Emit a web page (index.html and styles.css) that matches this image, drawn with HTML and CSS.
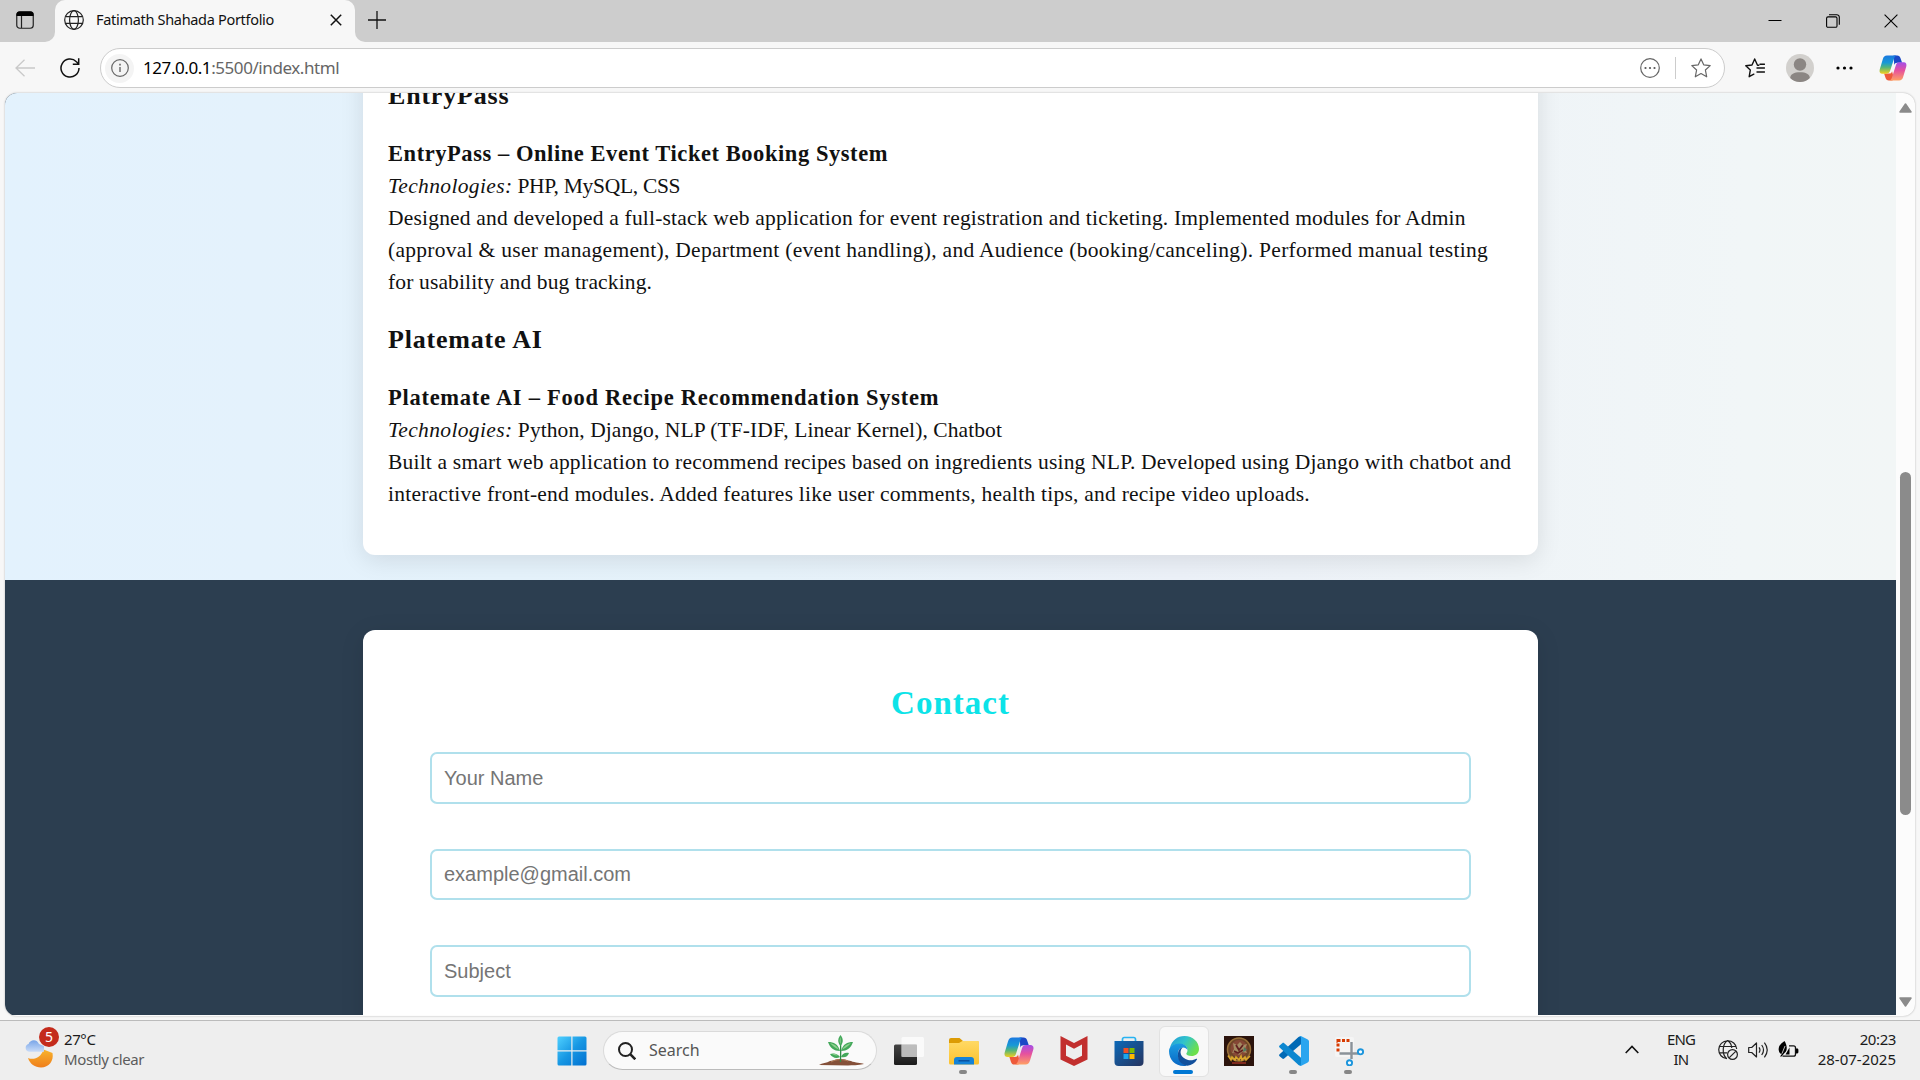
FILE: index.html
```html
<!DOCTYPE html>
<html lang="en">
<head>
<meta charset="utf-8">
<title>Fatimath Shahada Portfolio</title>
<link rel="stylesheet" href="styles.css">
</head>
<body>
<svg class="defs" width="0" height="0" aria-hidden="true">
  <defs>
    <linearGradient id="cpA" x1="0" y1="0" x2="0" y2="1"><stop offset="0" stop-color="#1a78e0"/><stop offset=".4" stop-color="#1799d6"/><stop offset=".65" stop-color="#52b57b"/><stop offset="1" stop-color="#f2cf1d"/></linearGradient>
    <linearGradient id="cpB" x1="0" y1="0" x2="0" y2="1"><stop offset="0" stop-color="#a34ee8"/><stop offset=".45" stop-color="#e6519e"/><stop offset="1" stop-color="#ffa063"/></linearGradient>
    <linearGradient id="win" x1="0" y1="0" x2="1" y2="1"><stop offset="0" stop-color="#4fd0ff"/><stop offset=".5" stop-color="#1797e3"/><stop offset="1" stop-color="#006fd0"/></linearGradient>
    <linearGradient id="fold" x1="0" y1="0" x2="0" y2="1"><stop offset="0" stop-color="#ffd965"/><stop offset="1" stop-color="#fcc22e"/></linearGradient>
    <linearGradient id="store" x1="0" y1="0" x2="1" y2="1"><stop offset="0" stop-color="#0c69b8"/><stop offset="1" stop-color="#26345f"/></linearGradient>
    <linearGradient id="edA" x1="0" y1="0" x2="1" y2=".5"><stop offset="0" stop-color="#2497d8"/><stop offset=".5" stop-color="#30c3cc"/><stop offset="1" stop-color="#6be04d"/></linearGradient>
    <linearGradient id="edB" x1="0" y1="0" x2="0" y2="1"><stop offset="0" stop-color="#1b9de2"/><stop offset="1" stop-color="#0a67c4"/></linearGradient>
    <linearGradient id="moon" x1="0" y1="0" x2="0" y2="1"><stop offset="0" stop-color="#f8b42c"/><stop offset="1" stop-color="#ef7e1b"/></linearGradient>
    <linearGradient id="cloud" x1="0" y1="0" x2="0" y2="1"><stop offset="0" stop-color="#79a5e8"/><stop offset="1" stop-color="#c9dcf8"/></linearGradient>
    <linearGradient id="tvw" x1="0" y1="0" x2="0" y2="1"><stop offset="0" stop-color="#444"/><stop offset="1" stop-color="#1b1b1b"/></linearGradient>
    <symbol id="copilot" viewBox="0 0 30 28">
      <path d="M15.500 .5h4c2 0 3 1 3.500 2.600l1.800 5.200h-5.300c-2 0-2.600.7-3.200 2.500L16 5z" fill="#1b48c6"/>
      <path d="M14.500 27.500h-4c-2 0-3-1-3.500-2.600L5.400 20h5.400c2 0 2.700-.7 3.200-2.500l1.500 6z" fill="#ee5a3a"/>
      <path d="M8.500 .5h10.300c-1.500.5-2.200 1.700-2.900 4L12 16.800c-.7 2.200-1.800 3.300-4 3.300H3.500C1 20.100 0 18 .7 15.500L4 4.500C4.800 1.800 6 .5 8.500.5z" fill="url(#cpA)"/>
      <path d="M21.500 27.500H11.200c1.500-.5 2.200-1.700 2.900-4L18 11.200c.7-2.200 1.800-3.300 4-3.300h4.500c2.500 0 3.500 2.100 2.800 4.600L26 23.500c-.8 2.700-2 4-4.500 4z" fill="url(#cpB)"/>
    </symbol>
  </defs>
</svg>

<div class="screen">
  <header class="titlebar">
    <div class="tab-actions">
      <svg width="18" height="18" viewBox="0 0 18 18"><rect x=".75" y=".75" width="16.500" height="16.500" rx="3" fill="none" stroke="#222" stroke-width="1.200"/><path d="M.5 5V3.500a3 3 0 0 1 3-3h11a3 3 0 0 1 3 3V5z" fill="#000"/><path d="M5.500 5v12" stroke="#222" stroke-width="1.200"/></svg>
    </div>
    <div class="tab">
      <svg width="20" height="20" viewBox="0 0 20 20" fill="none" stroke="#222" stroke-width="1.200"><circle cx="10" cy="10" r="9.300"/><ellipse cx="10" cy="10" rx="4.400" ry="9.300"/><path d="M1.500 6.700h17M1.500 13.300h17"/></svg>
      <span class="tab-title">Fatimath Shahada Portfolio</span>
      <svg class="tab-close" width="12" height="12" viewBox="0 0 12 12" stroke="#111" stroke-width="1.500"><path d="M.8.800l10.400 10.400M11.200.8L.8 11.200"/></svg>
    </div>
    <svg class="new-tab" width="18" height="18" viewBox="0 0 18 18" stroke="#111" stroke-width="1.300"><path d="M9 0v18M0 9h18"/></svg>
    <div class="window-buttons">
      <svg width="14" height="14" viewBox="0 0 14 14"><path d="M.5 6.500h13" stroke="#000"/></svg>
      <svg width="14" height="14" viewBox="0 0 14 14" fill="none" stroke="#000" stroke-width="1.100"><rect x=".6" y="2.900" width="10.400" height="10.400" rx="1.400"/><path d="M3 .7h7.800a2.500 2.500 0 0 1 2.500 2.500v7.600"/></svg>
      <svg width="14" height="14" viewBox="0 0 14 14" stroke="#000" stroke-width="1.100"><path d="M.6.600l12.800 12.800M13.400.6L.6 13.400"/></svg>
    </div>
  </header>

  <div class="toolbar">
    <svg class="back" width="20" height="18" viewBox="0 0 20 18" fill="none" stroke="#c9c9c9" stroke-width="1.300"><path d="M20 9H1M9.500.8L1 9l8.500 8.200"/></svg>
    <svg class="reload" width="20" height="20" viewBox="0 0 20 20" fill="none" stroke="#111" stroke-width="1.500"><path d="M19 10a9 9 0 1 1-2.600-6.300L18.500 5.700M18.700.3v5.900h-5.900"/></svg>
    <div class="address">
      <span class="info"><svg width="18" height="18" viewBox="0 0 18 18" fill="none" stroke="#666" stroke-width="1.200"><circle cx="9" cy="9" r="8.300"/><path d="M9 8v5" stroke-width="1.400"/><path d="M9 4.800v1.600" stroke-width="1.600"/></svg></span>
      <span class="url">127.0.0.1<span class="url-rest">:5500/index.html</span></span>
      <svg class="more-circle" width="20" height="20" viewBox="0 0 20 20"><circle cx="10" cy="10" r="9.300" fill="none" stroke="#666" stroke-width="1.200"/><g fill="#555"><circle cx="5.500" cy="10" r="1.100"/><circle cx="10" cy="10" r="1.100"/><circle cx="14.500" cy="10" r="1.100"/></g></svg>
      <span class="divider"></span>
      <svg width="20" height="20" viewBox="0 0 20 20" fill="none" stroke="#666" stroke-width="1.200" stroke-linejoin="round"><path d="M10 .9l2.700 5.900 6.500.8-4.800 4.400 1.300 6.800L10 15.600l-5.700 3.200L5.600 12 .8 7.600l6.500-.8z"/></svg>
    </div>
    <div class="toolbar-right">
      <svg width="20" height="20" viewBox="0 0 20 20" fill="none" stroke="#111" stroke-width="1.400" stroke-linejoin="round" stroke-linecap="round"><path d="M13.800 7.200h-1.300L9.700 1 7 7l-6.200.8 4.500 4.300-1.100 6.600 4.600-2.500M12 10h7.500M12 14h7.500M15 6.200h4.500"/></svg>
      <svg class="avatar" width="28" height="28" viewBox="0 0 28 28"><circle cx="14" cy="14" r="14" fill="#d2d0cd"/><circle cx="14" cy="10.500" r="6.200" fill="#8b8683"/><path d="M4.200 24c0-4 4-5.800 9.800-5.800s9.800 1.800 9.800 5.800A14 14 0 0 1 4.200 24z" fill="#8b8683"/></svg>
      <svg class="menu-dots" width="17" height="4" viewBox="0 0 17 4"><circle cx="2" cy="2" r="1.600"/><circle cx="8.500" cy="2" r="1.600"/><circle cx="15" cy="2" r="1.600"/></svg>
      <svg class="copilot" width="28" height="26"><use href="#copilot"/></svg>
    </div>
  </div>

  <div class="viewport">
    <main class="page">
      <section class="projects">
        <article class="card">
          <h3>EntryPass</h3>
          <p>
            <strong class="name-entry">EntryPass – Online Event Ticket Booking System</strong><br>
            <span class="tech-short"><em>Technologies:</em> PHP, MySQL, CSS</span><br>
            Designed and developed a full-stack web application for event registration and ticketing. Implemented modules for Admin<br>
            <span class="loose">(approval &amp; user management), Department (event handling), and Audience (booking/canceling). Performed manual testing</span><br>
            <span class="tight">for usability and bug tracking.</span>
          </p>
          <h3>Platemate AI</h3>
          <p>
            <strong class="name-plate">Platemate AI – Food Recipe Recommendation System</strong><br>
            <span class="tech-long"><em>Technologies:</em> Python, Django, NLP (TF-IDF, Linear Kernel), Chatbot</span><br>
            Built a smart web application to recommend recipes based on ingredients using NLP. Developed using Django with chatbot and<br>
            <span class="medium">interactive front-end modules. Added features like user comments, health tips, and recipe video uploads.</span>
          </p>
        </article>
      </section>
      <section class="contact">
        <form class="card contact-card">
          <h2>Contact</h2>
          <input type="text" placeholder="Your Name">
          <input type="email" placeholder="example@gmail.com">
          <input type="text" placeholder="Subject">
        </form>
      </section>
    </main>
    <div class="scrollbar">
      <svg width="13" height="10" viewBox="0 0 13 10"><path d="M6.500 1L12 9H1z" fill="#8b8b8b" stroke="#8b8b8b" stroke-width="1.500" stroke-linejoin="round"/></svg>
      <div class="thumb"></div>
      <svg width="13" height="10" viewBox="0 0 13 10"><path d="M6.500 9L12 1H1z" fill="#8b8b8b" stroke="#8b8b8b" stroke-width="1.500" stroke-linejoin="round"/></svg>
    </div>
  </div>

  <footer class="taskbar">
    <div class="weather">
      <svg width="36" height="36" viewBox="0 0 36 36"><path d="M3 25c6 2.500 13-.5 15.500-8.500L27.500 20C29 28 24 34.500 16 34.500 10 34.500 5 31 3 25z" fill="url(#moon)"/><path d="M4 18.800a4 4 0 0 1-.4-7.800C4.200 7.800 11 4.500 14 11l5 2v5.800z" fill="url(#cloud)"/></svg>
      <span class="badge">5</span>
      <div class="weather-text"><span>27°C</span><span class="muted">Mostly clear</span></div>
    </div>
    <div class="app">
      <svg width="30" height="30" viewBox="0 0 30 30"><path d="M2 .5h12.300v13.800H.5V2A1.500 1.500 0 0 1 2 .5zM15.500.5H28A1.500 1.500 0 0 1 29.500 2v12.300h-14zM.5 15.500h13.800v14H2A1.500 1.500 0 0 1 .5 28zM15.500 15.500h14V28a1.500 1.500 0 0 1-1.500 1.500H15.500z" fill="url(#win)"/></svg>
    </div>
    <div class="search">
      <svg width="18" height="18" viewBox="0 0 18 18" fill="none" stroke="#222" stroke-width="2"><circle cx="7.500" cy="7.500" r="6.500"/><path d="M12.200 12.200L17.300 17.300" stroke-width="2.600"/></svg>
      <span>Search</span>
      <svg class="plant" width="46" height="31" viewBox="0 0 46 31"><path d="M0 30c3-2 8-2 11-4 5-1 7-2.500 11-2 4 0 6 1.500 10 2 4 2 10 1.500 13 3-6 1.500-12 1-16 1.500z" fill="#845039"/><path d="M12 27c5-3 12-3 17-1" stroke="#b07b58" fill="none"/><path d="M21.500 27c.3-8 .3-14 0-22" stroke="#2d8b45" stroke-width="1.300" fill="none"/><g fill="#43a85a"><path d="M21.500 11C18 7 19 3 21.500 0 24 3 25 7 21.500 11z"/><path d="M21 16c-6 0-10-3-12-9 6 0 10 2 12 9zM22 16c6 0 10-3 12-9-6 0-10 2-12 9z"/><path d="M21 22c-4 2-8 .500-10-3 4-1.500 8 0 10 3zM22 22c4 1 7-.5 8-4-4-1-7 1-8 4z"/></g><g fill="#8ed08f"><path d="M21.700 9c-1.700-2-1.200-5 0-7zM20 14.500C16 13 13.500 11 11 8c4 1 7 3 9 6.500zM23 14.500c4-1.500 6.500-3.500 9-6.500-4 1-7 3-9 6.500zM19 20.500c-2 0-4 0-6-1.500 2-.5 4 0 6 1.500z"/></g></svg>
    </div>
    <div class="app"><svg width="30" height="30" viewBox="0 0 30 30"><rect x="0" y="8.500" width="23" height="20.500" rx="1.500" fill="url(#tvw)"/><rect x="7.500" y="1" width="22.500" height="20" rx="1.500" fill="#fff" fill-opacity=".72"/><rect x="7.500" y="8.500" width="15.500" height="12.500" fill="#b5b5b5" fill-opacity=".65"/></svg></div>
    <div class="app"><svg width="30" height="30" viewBox="0 0 30 30"><path d="M0 4a2 2 0 0 1 2-2h8.500L14 5h14a2 2 0 0 1 2 2v4H0z" fill="#dc9b04"/><path d="M0 7h10l3.500-2H28.500A1.500 1.500 0 0 1 30 6.500V27a1.500 1.500 0 0 1-1.500 1.500h-27A1.500 1.500 0 0 1 0 27z" fill="url(#fold)"/><path d="M5 28.500V24a3 3 0 0 1 3-3h14a3 3 0 0 1 3 3v4.500z" fill="#1583d8"/><path d="M9.500 24.800h11" stroke="#084f9c" stroke-width="1.400"/></svg><i class="dot"></i></div>
    <div class="app"><svg width="30" height="28"><use href="#copilot"/></svg></div>
    <div class="app"><svg width="28" height="30" viewBox="0 0 28 30"><path d="M.5 0L14 7 27.500 0v23.500L14 30 .5 23.500zM6 8.500v11.300l8 4 8-4V8.500l-8 4.300z" fill="#c22f2e" fill-rule="evenodd"/></svg></div>
    <div class="app"><svg width="30" height="30" viewBox="0 0 30 30"><path d="M8.500 6V3.200A1.700 1.700 0 0 1 10.200 1.500h9.600a1.700 1.700 0 0 1 1.700 1.700V6" fill="none" stroke="#27b3f2" stroke-width="1.700"/><path d="M.5 5h29v21a4 4 0 0 1-4 4h-21a4 4 0 0 1-4-4z" fill="url(#store)"/><path d="M9.500 12h5v5h-5z" fill="#f25022"/><path d="M15.500 12h5v5h-5z" fill="#7fba00"/><path d="M9.500 18h5v5h-5z" fill="#1ba7ec"/><path d="M15.500 18h5v5h-5z" fill="#ffb901"/></svg></div>
    <div class="app active"><svg width="30" height="30" viewBox="0 0 30 30"><path d="M1 12C2.500 4.500 8.500 0 15.500 0 24 0 30 6 30 13c0 4.500-3.500 7-7.500 7-3.500 0-5.200-1.200-5.200-2.200 0-.9 1.200-1.300 1.200-3.800 0-3.500-3.500-6-7.500-6C6.500 8 3 9.500 1 12z" fill="url(#edA)"/><path d="M0 15C.2 10.300 4.800 7.500 10.500 7.500c5 0 8 3.200 8 6.500-.8-1.500-2.500-2.500-4.500-2.500-3.500 0-5.500 3.500-5 7.500.6 5.500 4.500 9.500 9 10.700C7.500 31.500 0 24.500 0 15z" fill="url(#edB)"/><path d="M14 11.500c-3 1.500-4.300 8 2.500 11.500 4.200 2.200 8.500 1 10.800-.3.600-.2 1 .1.700.7C26 27 22.500 29 18.500 29.800 12 29 8.500 24 9 19c-.3-4 1.800-7.500 5-7.500z" fill="#12509c"/></svg><i class="dot wide"></i></div>
    <div class="app"><svg width="30" height="30" viewBox="0 0 30 30"><path d="M0 0h30v30H0z" fill="#2b130c"/><circle cx="15" cy="13.500" r="11.500" fill="#6d4527" stroke="#98703a" stroke-width="1.500"/><circle cx="15" cy="12.500" r="8.500" fill="#854735"/><path d="M9 7l4 2 3-3 3 3 4-1-2 5 2 4-5-1-3 3-3-3-4 1 2-4z" fill="#a38a62"/><path d="M12 9l3 5 4-5M10 15l4 2 5-3" stroke="#612020" stroke-width="1.800" fill="none"/><path d="M20 11l3 3-4 2z" fill="#4d7b60"/><path d="M4 19.500l3 4.500 1-3 3 3 1-3 3 3 2-4 1 4 3-3 1 3 4-4" stroke="#d9a62c" stroke-width="1.600" fill="none"/><path d="M8 27h14" stroke="#9c3224" stroke-width="1.500"/></svg></div>
    <div class="app"><svg width="30" height="30" viewBox="0 0 30 30"><path d="M22 0v8.300L5.200 22.500c-.7.600-1.300.6-1.900 0L.6 20.200c-.7-.6-.7-1.300 0-1.900L19.500 1z" fill="#0069b5"/><path d="M3.300 7.200c.600-.5 1.200-.5 1.900 0L22 21.700V30l-2.500-1L.6 11.500c-.7-.7-.7-1.300 0-1.900z" fill="#0c87d0"/><path d="M19.500 29.500c1 .7 1.900.7 2.900.2l5.900-2.900c1.100-.5 1.700-1.200 1.700-2.500V5.600c0-1.200-.6-1.900-1.700-2.400L22.400.3c-1-.5-2-.3-2.900.7 1.200-1 2.500-.3 2.500 1.200v25.600c0 1.500-1.300 2.500-2.500 1.700z" fill="#2aa5ef"/></svg><i class="dot"></i></div>
    <div class="app"><svg width="30" height="30" viewBox="0 0 30 30"><rect x="1" y="1" width="19" height="20" rx="2" fill="#f5f5f5"/><path d="M17.500 6v17M5.500 17.500H24" stroke="#8b9299" stroke-width="2.400"/><path d="M2.500 3h4v3h-3v1h-1zM8 3h3v3H8zM12.500 3h3v3h-3zM2.500 7.500h3v3h-3zM2.500 12.500h3v3h-3z" fill="#d83b01"/><g fill="#f4fbff" stroke="#1c95dc" stroke-width="1.900"><circle cx="26.500" cy="15.800" r="2.600"/><circle cx="15.500" cy="26.800" r="2.600"/></g></svg><i class="dot"></i></div>
    <div class="tray">
      <svg width="14" height="9" viewBox="0 0 14 9" fill="none" stroke="#111" stroke-width="1.600"><path d="M.7 8L7 1.500 13.300 8"/></svg>
      <div class="lang"><span>ENG</span><span>IN</span></div>
      <svg width="20" height="20" viewBox="0 0 20 20" fill="none" stroke="#222" stroke-width="1.200"><path d="M9 18.700A9 9 0 1 1 18.700 9M8.500 18.500C3.500 14 4.500 3 9.700.7M13.800 8C13.500 4.500 12 2 9.700.7M1.500 6.500h16.500M1.500 12.800H9"/><circle cx="14.500" cy="14.500" r="4.900"/><path d="M11.300 17.700l6.400-6.400"/></svg>
      <svg class="volume" width="21" height="18" viewBox="0 0 21 18" fill="none" stroke="#222" stroke-width="1.200" stroke-linejoin="round"><path d="M.7 6.500h3L8.500 2v14l-4.800-4.500h-3z"/><path d="M11 6.300c1.200 1.700 1.200 3.700 0 5.400M13.700 4c2.200 3 2.200 7 0 10M16.400 1.700c3.500 4.500 3.500 10.100 0 14.600"/></svg>
      <svg width="21" height="18" viewBox="0 0 21 18"><path d="M11 4.800h4.500a2 2 0 0 1 2 2v6.400a2 2 0 0 1-2 2H4.500" fill="none" stroke="#111" stroke-width="1.300"/><path d="M18 7.500h1.200c.8 0 1.200.7 1.200 1.400v2.200c0 .7-.4 1.400-1.200 1.400H18z"/><path d="M7.500 13.500L11.500 6.500v7z"/><path d="M6.500 0C2 3 0 6 .8 9.500 1.200 12 2.500 13 4 12.800L2 15.500h1.500L6.500 12C10 9.500 9 4 6.500 0z"/><path d="M7 5L4 12.500" stroke="#eee" stroke-width=".8"/></svg>
      <div class="clock"><span class="time">20:23</span><span>28-07-2025</span></div>
    </div>
  </footer>
</div>
</body>
</html>
```
FILE: styles.css
```css
* { box-sizing: border-box; }
body { margin: 0; }
.defs { position: absolute; }
svg { display: block; flex: none; }
.screen {
  width: 1920px; height: 1080px; overflow: hidden;
  display: flex; flex-direction: column;
  background: #f7f7f7; color: #1b1b1b;
  font-family: "Noto Sans", "Open Sans", sans-serif; font-size: 15px;
  white-space: nowrap;
}

/* Browser window */
.titlebar { height: 42px; display: flex; background: #f7f7f7; flex: none; }
.tab-actions { width: 55px; padding: 11px 0 0 16px; background: #cdcdcd; border-bottom-right-radius: 10px; }
.tab { width: 300px; display: flex; align-items: center; padding: 0 13px 2px 9px; background: #f7f7f7; border-radius: 10px 10px 0 0; box-shadow: 0 -10px 0 #cdcdcd; }
.tab-title { margin: 0 0 2px 12px; color: #111; font-size: 14.5px; letter-spacing: -.31px; }
.tab-close { margin-left: auto; }
.new-tab { box-sizing: content-box; padding: 11px 13px 13px; background: #cdcdcd; border-bottom-left-radius: 10px; }
.window-buttons { flex: 1; display: flex; justify-content: flex-end; gap: 44px; padding: 14px 22px 0 0; background: #cdcdcd; }

.toolbar { height: 51px; flex: none; display: flex; align-items: center; padding: 1px 13px 0 15px; }
.reload { margin-left: 25px; }
.address { width: 1625px; height: 40px; margin-left: 20px; display: flex; align-items: center; padding: 0 13px 0 4px; background: #fff; border: 1px solid #ccc; border-radius: 20px; }
.info { width: 29px; height: 29px; border-radius: 50%; background: #f4f4f4; display: grid; place-items: center; }
.url { margin: 0 0 1px 9px; font-size: 17px; letter-spacing: -.43px; color: #000; }
.url-rest { color: #666; }
.more-circle { margin-left: auto; }
.divider { width: 1px; height: 22px; margin: 0 15px; background: #ccc; }
.toolbar-right { flex: 1; display: flex; align-items: center; margin-left: 20px; }
.avatar { margin-left: 21px; }
.menu-dots { margin-left: 22px; }
.copilot { margin-left: auto; }

/* Portfolio page */
.viewport { height: 923px; width: 1910px; margin-left: 5px; flex: none; display: flex; background: #fcfcfc; border-radius: 12px; overflow: hidden; box-shadow: 0 0 2px #aaa; }
.page { width: 1891px; height: 922px; overflow: hidden; background: #2c3e50; font-family: "Liberation Serif", serif; font-size: 21.5px; line-height: 32px; color: #111; }
.projects { height: 487px; display: flex; flex-direction: column; justify-content: flex-end; align-items: center; padding-bottom: 25px; overflow: hidden; background: linear-gradient(90deg, #e3f2fd, #e6f2fa 40%, #ecf1f8 62%, #f1f6f7 92%, #f2f6f6); }
.card { width: 1175px; padding: 25px; background: #fff; border-radius: 12px; box-shadow: 0 5px 25px rgba(0, 0, 0, .1); }
.card h3 { margin: 23.4px 0; font-size: 26px; line-height: 37.4px; letter-spacing: .8px; }
.card p { margin: 20px 0; letter-spacing: .196px; }
.card strong { font-size: 22.5px; line-height: 31px; }
.card em { letter-spacing: .35px; }
.name-entry { letter-spacing: .56px; }
.name-plate { letter-spacing: .73px; }
.tech-short { letter-spacing: -.3px; }
.tech-long { letter-spacing: .08px; }
.loose { letter-spacing: .283px; }
.medium { letter-spacing: .236px; }
.tight { letter-spacing: .14px; }
.contact { height: 436px; padding-top: 50px; display: flex; justify-content: center; }
.contact-card { height: 450px; padding: 50px 67px; display: flex; flex-direction: column; gap: 45px; }
.contact-card h2 { margin: -1px 0 -20px; text-align: center; font-size: 33px; line-height: 48px; letter-spacing: 1px; color: #0de3e8; }
.contact-card input { height: 51.6px; flex: none; padding: 1px 12px 0; border: 2px solid #b0e0ec; border-radius: 7px; background: #fff; font: 20px "Liberation Sans", Arial, sans-serif; outline: 0; }
.contact-card input::placeholder { color: #757575; }
.scrollbar { width: 19px; display: flex; flex-direction: column; align-items: center; padding: 10px 0 9px; }
.thumb { width: 11px; height: 343px; margin: 359px 0 auto; border-radius: 6px; background: #8b8b8b; }

/* Desktop taskbar */
.taskbar { height: 60px; margin-top: 4px; flex: none; display: flex; align-items: center; background: #eee; border-top: 1px solid #bbb; }
.weather { width: 544px; height: 100%; position: relative; padding-left: 25px; display: flex; align-items: center; }
.badge { position: absolute; left: 39px; top: 6px; width: 20px; height: 20px; border-radius: 50%; background: #c42b1c; color: #fff; font-size: 14px; line-height: 20px; text-align: center; }
.weather-text, .lang, .clock { display: flex; flex-direction: column; align-items: flex-start; line-height: 20px; }
.weather-text { margin: 0 0 4px 3px; letter-spacing: -.4px; }
.muted { color: #5c5c5c; }
.app { width: 55px; height: 100%; position: relative; display: grid; place-items: center; }
.active::before { content: ""; position: absolute; left: 3px; top: 5px; width: 48px; height: 49px; border-radius: 6px; background: #f8f8f8; border: 1px solid #e2e2e2; }
.active svg { position: relative; }
.dot { position: absolute; bottom: 6px; left: 23px; width: 8px; height: 4px; border-radius: 2px; background: #868686; }
.dot.wide { left: 17px; width: 20px; background: #0078d4; }
.search { width: 274px; height: 39px; margin: 0 4px; padding: 0 11px 0 14px; display: flex; align-items: center; background: #fafafa; border: 1px solid #dadada; border-bottom-color: #bbb; border-radius: 20px; color: #555; font-size: 16px; }
.search span { margin: 0 0 1px 13px; }
.plant { margin-left: auto; }
.tray { margin: 0 0 2px auto; padding-right: 24px; display: flex; align-items: center; }
.lang { width: 28px; margin: 0 23px 2px 28px; align-items: center; letter-spacing: -.8px; }
.volume { margin: 0 9px 0 10px; }
.clock { width: 78px; margin: 0 0 2px 19px; align-items: flex-end; }
.time { letter-spacing: -.4px; }
```
